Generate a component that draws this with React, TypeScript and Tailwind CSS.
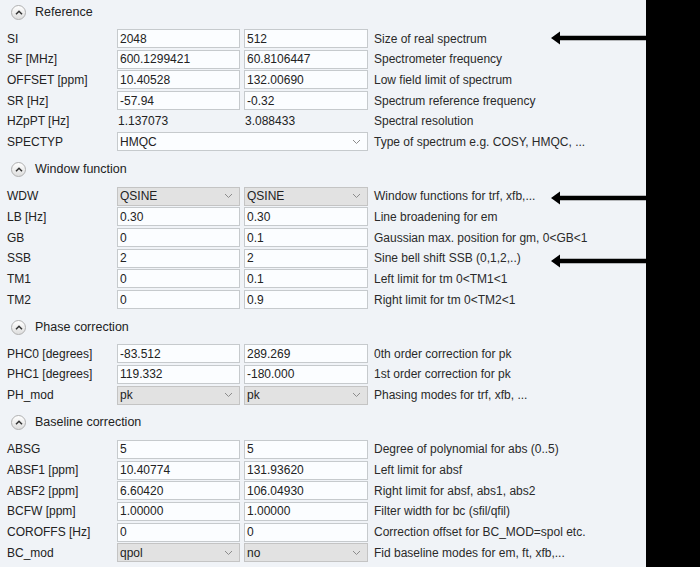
type Kind = 'input' | 'text' | 'select' | 'wide';

interface Row {
  label: string;
  a: string;
  b?: string;
  desc: string;
  kind: Kind;
}

interface Section {
  title: string;
  rows: Row[];
}

const SECTIONS: Section[] = [
  {
    title: 'Reference',
    rows: [
      { label: 'SI', a: '2048', b: '512', desc: 'Size of real spectrum', kind: 'input' },
      { label: 'SF [MHz]', a: '600.1299421', b: '60.8106447', desc: 'Spectrometer frequency', kind: 'input' },
      { label: 'OFFSET [ppm]', a: '10.40528', b: '132.00690', desc: 'Low field limit of spectrum', kind: 'input' },
      { label: 'SR [Hz]', a: '-57.94', b: '-0.32', desc: 'Spectrum reference frequency', kind: 'input' },
      { label: 'HZpPT [Hz]', a: '1.137073', b: '3.088433', desc: 'Spectral resolution', kind: 'text' },
      { label: 'SPECTYP', a: 'HMQC', desc: 'Type of spectrum e.g. COSY, HMQC, ...', kind: 'wide' },
    ],
  },
  {
    title: 'Window function',
    rows: [
      { label: 'WDW', a: 'QSINE', b: 'QSINE', desc: 'Window functions for trf, xfb,...', kind: 'select' },
      { label: 'LB [Hz]', a: '0.30', b: '0.30', desc: 'Line broadening for em', kind: 'input' },
      { label: 'GB', a: '0', b: '0.1', desc: 'Gaussian max. position for gm, 0<GB<1', kind: 'input' },
      { label: 'SSB', a: '2', b: '2', desc: 'Sine bell shift SSB (0,1,2,..)', kind: 'input' },
      { label: 'TM1', a: '0', b: '0.1', desc: 'Left limit for tm 0<TM1<1', kind: 'input' },
      { label: 'TM2', a: '0', b: '0.9', desc: 'Right limit for tm 0<TM2<1', kind: 'input' },
    ],
  },
  {
    title: 'Phase correction',
    rows: [
      { label: 'PHC0 [degrees]', a: '-83.512', b: '289.269', desc: '0th order correction for pk', kind: 'input' },
      { label: 'PHC1 [degrees]', a: '119.332', b: '-180.000', desc: '1st order correction for pk', kind: 'input' },
      { label: 'PH_mod', a: 'pk', b: 'pk', desc: 'Phasing modes for trf, xfb, ...', kind: 'select' },
    ],
  },
  {
    title: 'Baseline correction',
    rows: [
      { label: 'ABSG', a: '5', b: '5', desc: 'Degree of polynomial for abs (0..5)', kind: 'input' },
      { label: 'ABSF1 [ppm]', a: '10.40774', b: '131.93620', desc: 'Left limit for absf', kind: 'input' },
      { label: 'ABSF2 [ppm]', a: '6.60420', b: '106.04930', desc: 'Right limit for absf, abs1, abs2', kind: 'input' },
      { label: 'BCFW [ppm]', a: '1.00000', b: '1.00000', desc: 'Filter width for bc (sfil/qfil)', kind: 'input' },
      { label: 'COROFFS [Hz]', a: '0', b: '0', desc: 'Correction offset for BC_MOD=spol etc.', kind: 'input' },
      { label: 'BC_mod', a: 'qpol', b: 'no', desc: 'Fid baseline modes for em, ft, xfb,...', kind: 'select' },
    ],
  },
];

function Chevron() {
  return (
    <svg width="9" height="6" viewBox="0 0 9 6" className="shrink-0">
      <path d="M1 1l3.5 3.5L8 1" fill="none" stroke="#8c8c8c" strokeWidth="1" />
    </svg>
  );
}

function Box({ value, kind }: { value: string; kind: Kind }) {
  if (kind === 'text') {
    return <div className="flex h-[19px] items-center pl-[1px]">{value}</div>;
  }
  if (kind === 'input') {
    return (
      <div className="flex h-[19px] items-center border border-[#c6cacd] bg-[#fbfdff] pl-[2px]">{value}</div>
    );
  }
  const bg = kind === 'wide' ? 'bg-[#fbfdff] border-[#c6cacd]' : 'bg-[#e2e2e2] border-[#c4c4c4]';
  return (
    <div className={`flex h-[19px] items-center justify-between border pl-[2px] pr-[6px] ${bg}`}>
      <span>{value}</span>
      <Chevron />
    </div>
  );
}

function SectionHeader({ title }: { title: string }) {
  return (
    <div className="flex h-[24px] items-center gap-[9px] pl-[11px] text-[12.5px] text-[#222]">
      <span className="flex h-[15px] w-[15px] items-center justify-center rounded-full border border-[#b0b0b0] bg-gradient-to-b from-white to-[#dedede]">
        <svg width="8" height="5" viewBox="0 0 8 5">
          <path d="M1 4.2l3-3 3 3" fill="none" stroke="#333" strokeWidth="1.5" />
        </svg>
      </span>
      <span>{title}</span>
    </div>
  );
}

function Arrow({ top }: { top: number }) {
  return (
    <svg
      width="96"
      height="14"
      viewBox="0 0 96 14"
      className="absolute left-[551px]"
      style={{ top: top - 7 }}
    >
      <path d="M0 7L9 0.5V4.8H96V9.2H9V13.5Z" fill="#000" />
    </svg>
  );
}

export default function App() {
  return (
    <div className="relative flex h-[567px] w-[700px] overflow-hidden font-['Liberation_Sans',Arial,sans-serif] text-[12px] text-[#222]">
      <div className="flex w-[646px] flex-col gap-[4.5px] bg-[#f0f3f7]">
        {SECTIONS.map((s) => (
          <div key={s.title} className="flex flex-col">
            <SectionHeader title={s.title} />
            <div className="mt-[5px] flex flex-col">
              {s.rows.map((r) => (
                <div key={r.label} className="flex h-[20.7px] items-start pl-[7px]">
                  <div className="flex h-[19px] w-[110px] items-center">{r.label}</div>
                  {r.kind === 'wide' ? (
                    <div className="w-[251px]">
                      <Box value={r.a} kind={r.kind} />
                    </div>
                  ) : (
                    <div className="flex gap-[4px]">
                      <div className="w-[123px]">
                        <Box value={r.a} kind={r.kind} />
                      </div>
                      <div className="w-[124px]">
                        <Box value={r.b ?? ''} kind={r.kind} />
                      </div>
                    </div>
                  )}
                  <div className="ml-[6px] flex h-[19px] items-center whitespace-nowrap text-[#2a2a2a]">{r.desc}</div>
                </div>
              ))}
            </div>
          </div>
        ))}
      </div>
      <div className="flex-1 bg-black" />
      <Arrow top={38} />
      <Arrow top={198} />
      <Arrow top={261} />
    </div>
  );
}
